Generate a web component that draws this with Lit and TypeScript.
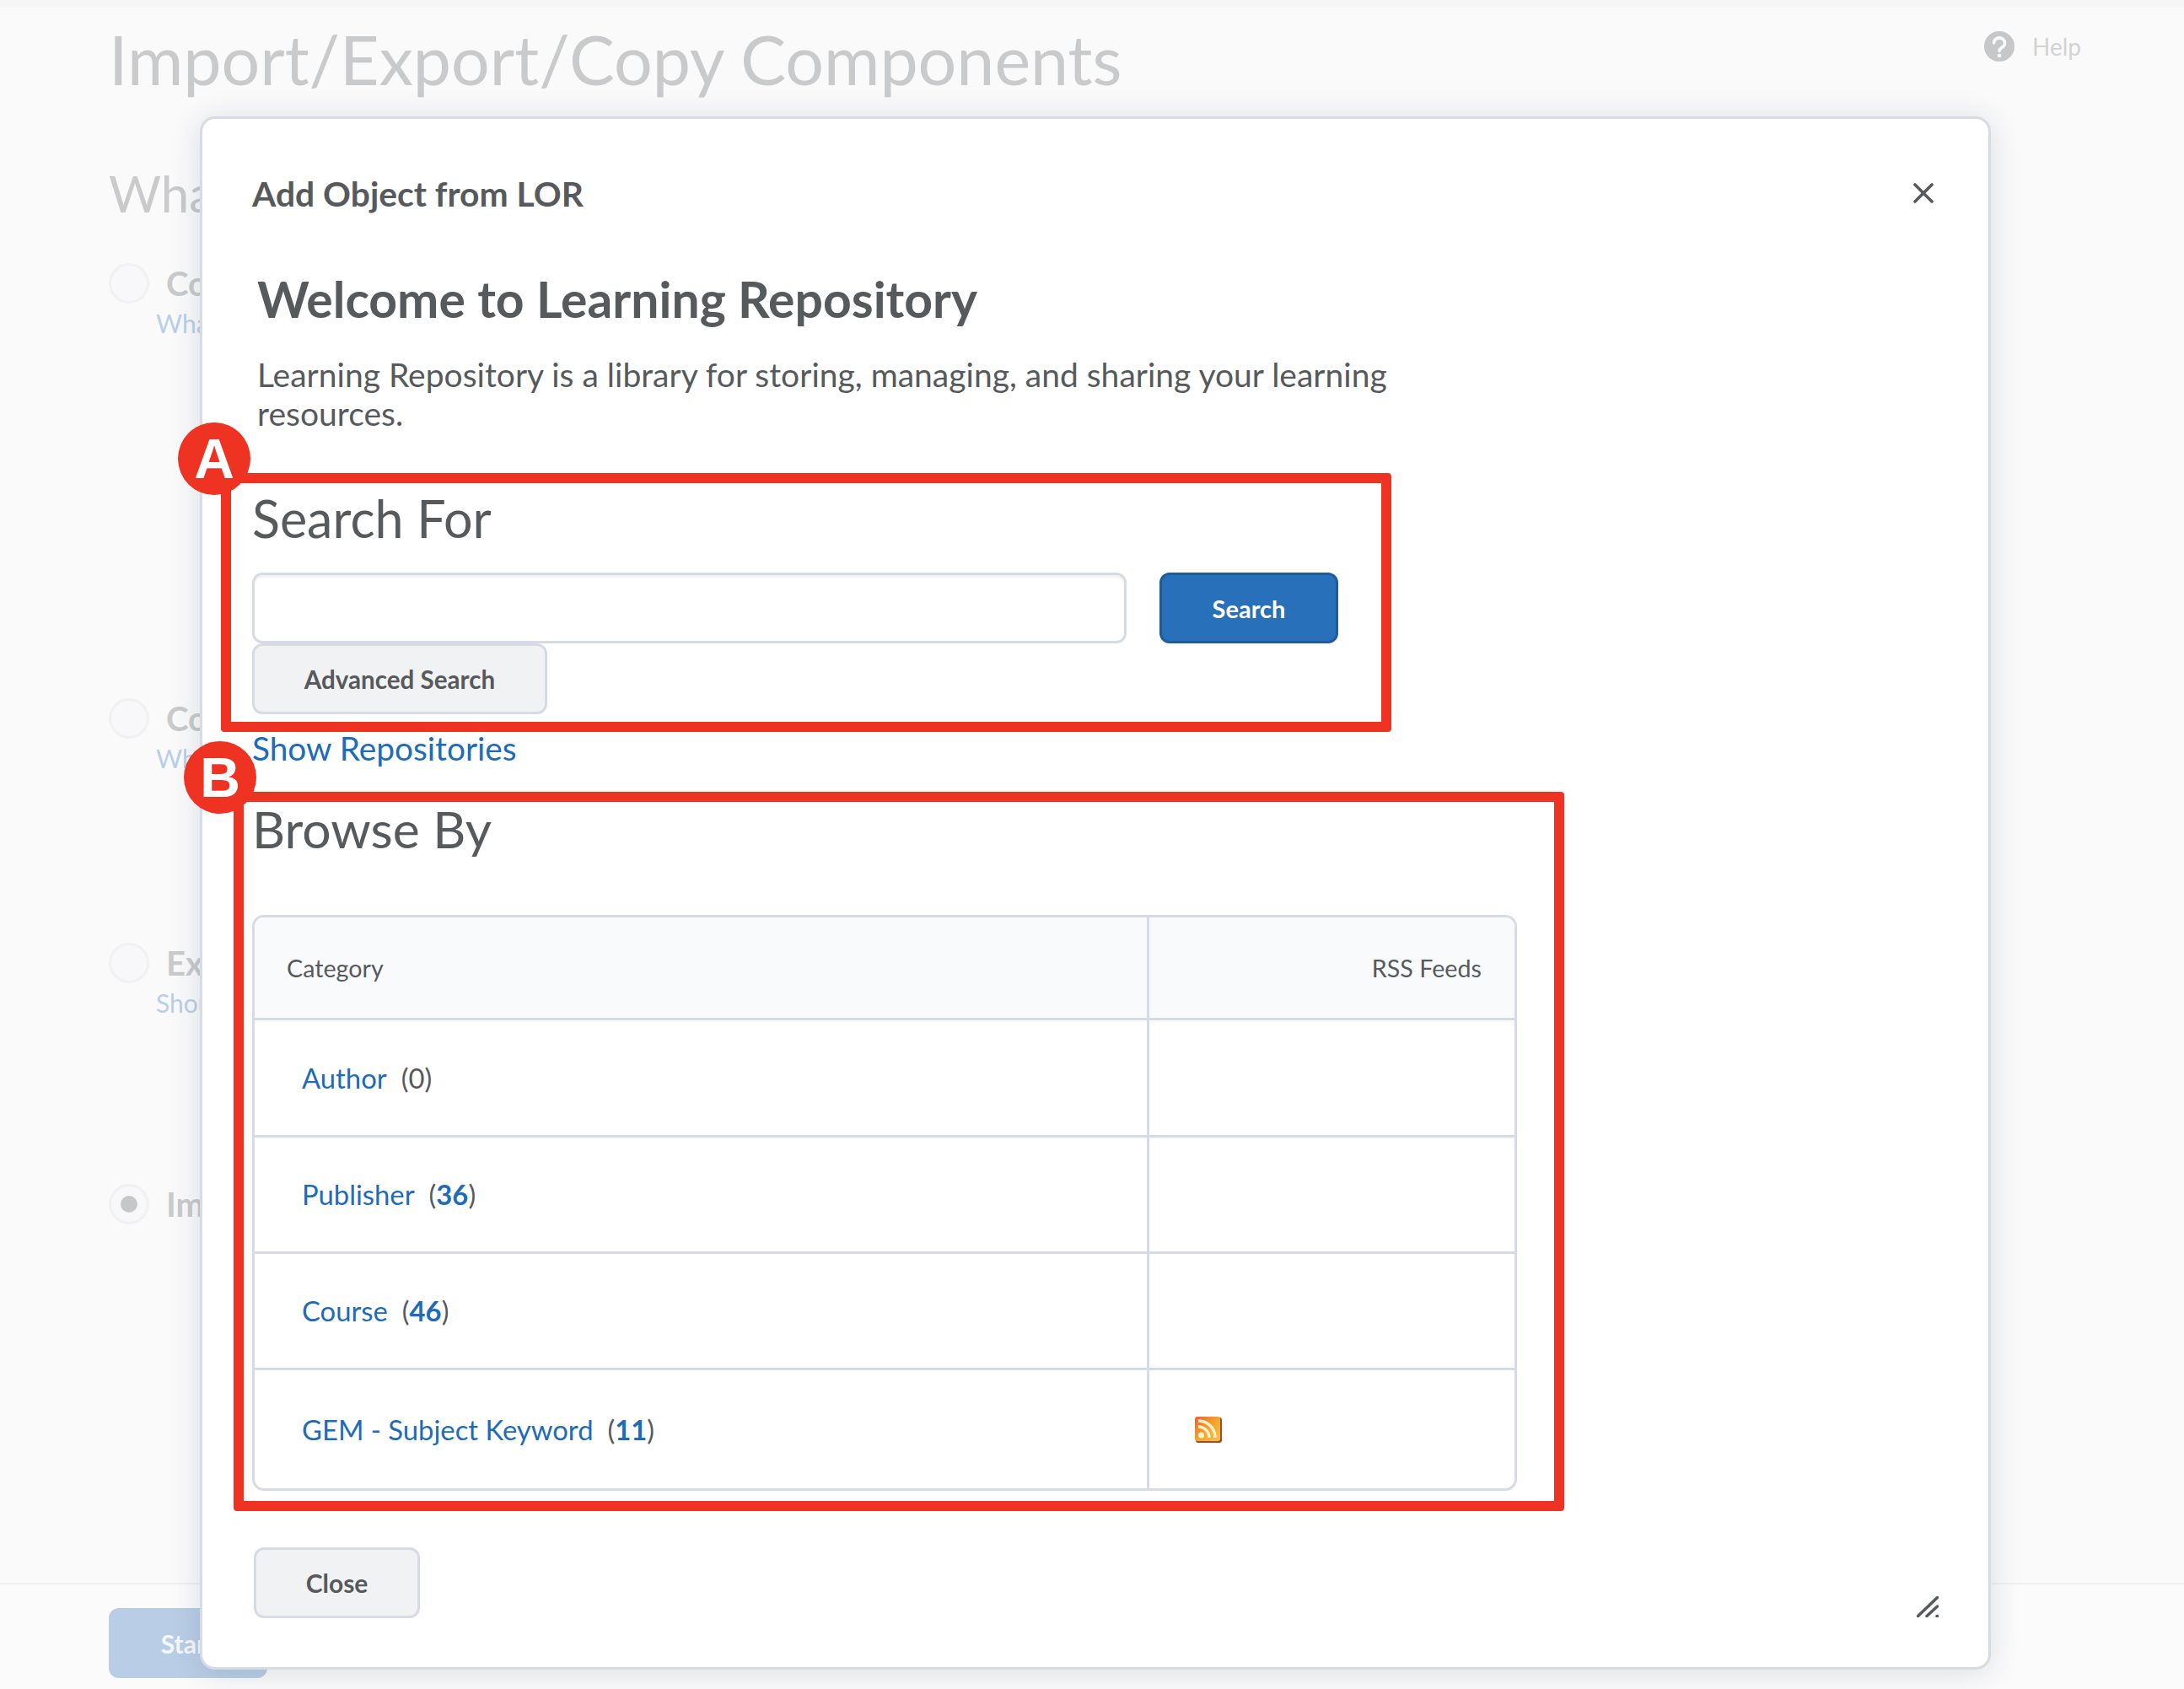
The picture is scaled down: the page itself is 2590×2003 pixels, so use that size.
import { LitElement, html, css } from "lit";
import { customElement } from "lit/decorators.js";

const choices = [
  { label: "Copy Components from Another Org Unit", hint: "What is copied?", gap: 516 },
  { label: "Copy Components from Parent", hint: "What is copied?", gap: 290 },
  { label: "Export as Brightspace Package", hint: "Should I export?", gap: 286 },
  { label: "Import Components", hint: "", gap: 0, selected: true },
];

const rows = [
  { name: "Author", count: "0", empty: true, height: 139 },
  { name: "Publisher", count: "36", height: 138 },
  { name: "Course", count: "46", height: 138 },
  { name: "GEM - Subject Keyword", count: "11", rss: true, height: 143 },
];

@customElement("app-root")
export class AppRoot extends LitElement {
  static styles = css`
    :host {
      display: block;
      position: relative;
      width: 2590px;
      height: 2003px;
      overflow: hidden;
      background: #fafafb;
      font-family: Lato, "Noto Sans", sans-serif;
      color: #565a5c;
    }

    /* page behind the dialog */
    .page {
      display: flex;
      flex-direction: column;
      height: 100%;
      box-sizing: border-box;
      border-top: 9px solid #f6f6f7;
    }
    .main {
      flex: 1;
      padding-left: 129px;
    }
    .top {
      display: flex;
      justify-content: space-between;
      align-items: flex-start;
    }
    .top h1 {
      margin: 18px 0 0;
      font-size: 80.700px;
      line-height: 86px;
      font-weight: 400;
      color: #c9cacb;
    }
    .help {
      display: flex;
      align-items: center;
      gap: 21px;
      margin: 28px 122px 0 0;
      font-size: 28px;
      line-height: 36px;
      color: #d3d3d4;
    }
    .help svg {
      width: 36px;
      height: 36px;
    }
    .main h2 {
      margin: 80px 0 0;
      font-size: 60px;
      line-height: 72px;
      font-weight: 400;
      color: #c9cacb;
    }
    .choices {
      margin-top: 47px;
    }
    .choice {
      display: flex;
      align-items: center;
      gap: 20px;
      height: 48px;
      font-size: 40px;
      font-weight: 700;
      color: #c9cacb;
    }
    .radio {
      width: 48px;
      height: 48px;
      box-sizing: border-box;
      border: 3px solid #f0f1f3;
      border-radius: 50%;
      background: #f8f8fa;
      display: flex;
      align-items: center;
      justify-content: center;
    }
    .radio i {
      width: 20px;
      height: 20px;
      border-radius: 50%;
      background: #c6c7c9;
    }
    .hint {
      margin: 4px 0 0 56px;
      font-size: 30px;
      line-height: 38px;
      color: #b9cfe8;
    }
    .footer {
      height: 126px;
      flex: none;
      box-sizing: border-box;
      border-top: 2px solid #f0f0f3;
      background: #fbfbfc;
      padding: 28px 0 0 129px;
    }
    .start {
      width: 188px;
      height: 83px;
      border-radius: 12px;
      background: #b9cee6;
      color: #f4f7fb;
      font-size: 30px;
      font-weight: 700;
      display: flex;
      align-items: center;
      justify-content: center;
    }

    /* dialog */
    .dialog {
      position: absolute;
      left: 237px;
      top: 138px;
      width: 2124px;
      height: 1842px;
      box-sizing: border-box;
      border: 3px solid #d6dbe5;
      border-radius: 18px;
      background: #fff;
      box-shadow: 0 4px 36px rgba(30, 40, 60, 0.14);
      padding: 0 59px;
    }
    .dialog-title {
      margin: 0;
      padding-top: 64px;
      font-size: 40.800px;
      line-height: 50px;
      font-weight: 700;
    }
    .close {
      position: absolute;
      left: 2029px;
      top: 76px;
      width: 24px;
      height: 24px;
    }
    .grip {
      position: absolute;
      left: 2033px;
      top: 1752px;
      width: 26px;
      height: 25px;
    }
    .intro {
      padding-left: 6px;
    }
    .intro h2 {
      margin: 64px 0 0;
      font-size: 58.900px;
      line-height: 72px;
      font-weight: 700;
    }
    .intro p {
      margin: 30px 0 0;
      width: 1400px;
      font-size: 39px;
      line-height: 46px;
    }
    h3 {
      margin: 0;
      font-size: 61px;
      line-height: 74px;
      font-weight: 400;
    }
    .search-title {
      margin-top: 65px;
    }
    .search-row {
      display: flex;
      gap: 39px;
      margin-top: 27px;
    }
    .input {
      width: 1037px;
      height: 84px;
      box-sizing: border-box;
      border: 3px solid #d6dbe5;
      border-top-width: 3px;
      border-radius: 12px;
      background: #fff;
      box-shadow: inset 0 3px 0 #f2f3f6;
    }
    .btn {
      box-sizing: border-box;
      height: 84px;
      border-radius: 12px;
      border: 3px solid #d6dbe5;
      background: #f1f2f4;
      display: flex;
      align-items: center;
      justify-content: center;
      font-size: 29.600px;
      font-weight: 700;
      color: #565a5c;
    }
    .btn.primary {
      width: 212px;
      background: #2870b9;
      border-color: #1f5c9c;
      color: #fff;
      font-size: 29px;
    }
    .btn.advanced {
      width: 350px;
    }
    .btn.close-btn {
      width: 197px;
      margin: 67px 0 0 2px;
      font-size: 30px;
    }
    a {
      color: #1e6bb8;
      text-decoration: none;
    }
    .repos {
      display: block;
      margin-top: 16px;
      font-size: 38.800px;
      line-height: 48px;
    }
    .browse-title {
      margin-top: 35px;
      font-size: 60.600px;
    }
    .table {
      margin-top: 65px;
      width: 1500px;
      box-sizing: border-box;
      border: 3px solid #d6dbe5;
      border-radius: 14px;
      overflow: hidden;
    }
    .row {
      display: grid;
      grid-template-columns: 1058px 1fr;
      border-top: 3px solid #d6dbe5;
      box-sizing: border-box;
    }
    .row.head {
      border-top: none;
      height: 119px;
      background: #f9fafc;
      font-size: 28.700px;
    }
    .cell {
      display: flex;
      align-items: center;
      min-width: 0;
    }
    .cell + .cell {
      border-left: 3px solid #d6dbe5;
    }
    .head .cell:first-child {
      padding-left: 38px;
    }
    .head .cell + .cell {
      justify-content: flex-end;
      padding-right: 39px;
    }
    .name {
      padding-left: 56px;
      font-size: 32.800px;
      gap: 17px;
    }
    .name b {
      color: #1e6bb8;
    }
    .rss {
      width: 32px;
      height: 31px;
      margin-left: 54px;
    }

    /* red call-outs drawn on top of the screenshot */
    .mark {
      position: absolute;
      box-sizing: border-box;
      border: 12px solid #ef3323;
      border-radius: 4px;
    }
    .mark.a {
      left: 262px;
      top: 561px;
      width: 1388px;
      height: 307px;
    }
    .mark.b {
      left: 277px;
      top: 939px;
      width: 1578px;
      height: 853px;
    }
    .badge {
      position: absolute;
      width: 86px;
      height: 86px;
      border-radius: 50%;
      background: #ef3323;
      color: #fff;
      font-family: "Liberation Sans", Arial, sans-serif;
      font-weight: 700;
      font-size: 66px;
      line-height: 86px;
      text-align: center;
    }
    .badge.a {
      left: 211px;
      top: 501px;
    }
    .badge.b {
      left: 218px;
      top: 879px;
    }
  `;

  render() {
    return html`
      <div class="page">
        <div class="main">
          <div class="top">
            <h1>Import/Export/Copy Components</h1>
            <div class="help">
              <svg viewBox="0 0 36 36">
                <circle cx="18" cy="18" r="18" fill="#c6c7c9" />
                <path d="M11.5 14a6.5 6 0 1 1 10 5c-2 1.300-3.500 2.200-3.500 4.500" fill="none" stroke="#fafafb" stroke-width="3.600" stroke-linecap="round" />
                <circle cx="18" cy="29" r="2.300" fill="#fafafb" />
              </svg>
              Help
            </div>
          </div>
          <h2>What would you like to do?</h2>
          <div class="choices">
            ${choices.map(
              (c) => html`
                <div class="choice">
                  <span class="radio">${c.selected ? html`<i></i>` : ""}</span>
                  ${c.label}
                </div>
                ${c.hint ? html`<div class="hint" style="margin-bottom:${c.gap - 90}px">${c.hint}</div>` : ""}
              `
            )}
          </div>
        </div>
        <div class="footer"><div class="start">Start</div></div>
      </div>

      <div class="dialog">
        <h4 class="dialog-title">Add Object from LOR</h4>
        <svg class="close" viewBox="0 0 24 24">
          <path d="M2 2l20 20M22 2L2 22" stroke="#565a5c" stroke-width="3.600" stroke-linecap="round" />
        </svg>
        <div class="intro">
          <h2>Welcome to Learning Repository</h2>
          <p>Learning Repository is a library for storing, managing, and sharing your learning resources.</p>
        </div>
        <h3 class="search-title">Search For</h3>
        <div class="search-row">
          <div class="input"></div>
          <div class="btn primary">Search</div>
        </div>
        <div class="btn advanced">Advanced Search</div>
        <a class="repos" href="#">Show Repositories</a>
        <h3 class="browse-title">Browse By</h3>
        <div class="table">
          <div class="row head">
            <div class="cell">Category</div>
            <div class="cell">RSS Feeds</div>
          </div>
          ${rows.map(
            (r) => html`
              <div class="row" style="height:${r.height}px">
                <div class="cell name">
                  <a href="#">${r.name}</a>
                  <span>(${r.empty ? r.count : html`<b>${r.count}</b>`})</span>
                </div>
                <div class="cell">
                  ${r.rss
                    ? html`<svg class="rss" viewBox="0 0 32 31">
                        <defs>
                          <linearGradient id="rssfill" x1="0" y1="0" x2="1" y2="1">
                            <stop offset="0" stop-color="#e8623a" />
                            <stop offset="0.5" stop-color="#f4a428" />
                            <stop offset="1" stop-color="#f6c44a" />
                          </linearGradient>
                        </defs>
                        <rect x="1" y="1" width="31" height="30" rx="3" fill="#a8482c" />
                        <rect x="0" y="0" width="30" height="29" rx="3" fill="url(#rssfill)" />
                        <circle cx="7.500" cy="22" r="3.500" fill="#fff4d0" />
                        <path d="M4 12a13 13 0 0 1 13 13M4 5a20 20 0 0 1 20 20" fill="none" stroke="#fff0c8" stroke-width="3.500" />
                      </svg>`
                    : ""}
                </div>
              </div>
            `
          )}
        </div>
        <div class="btn close-btn">Close</div>
        <svg class="grip" viewBox="0 0 26 25">
          <path d="M1.500 23.500L24.500 1.500M12 23.500L24.500 12M24 23.500h.5" stroke="#565a5c" stroke-width="3.500" stroke-linecap="round" fill="none" />
        </svg>
      </div>

      <div class="mark a"></div>
      <div class="mark b"></div>
      <div class="badge a">A</div>
      <div class="badge b">B</div>
    `;
  }
}
